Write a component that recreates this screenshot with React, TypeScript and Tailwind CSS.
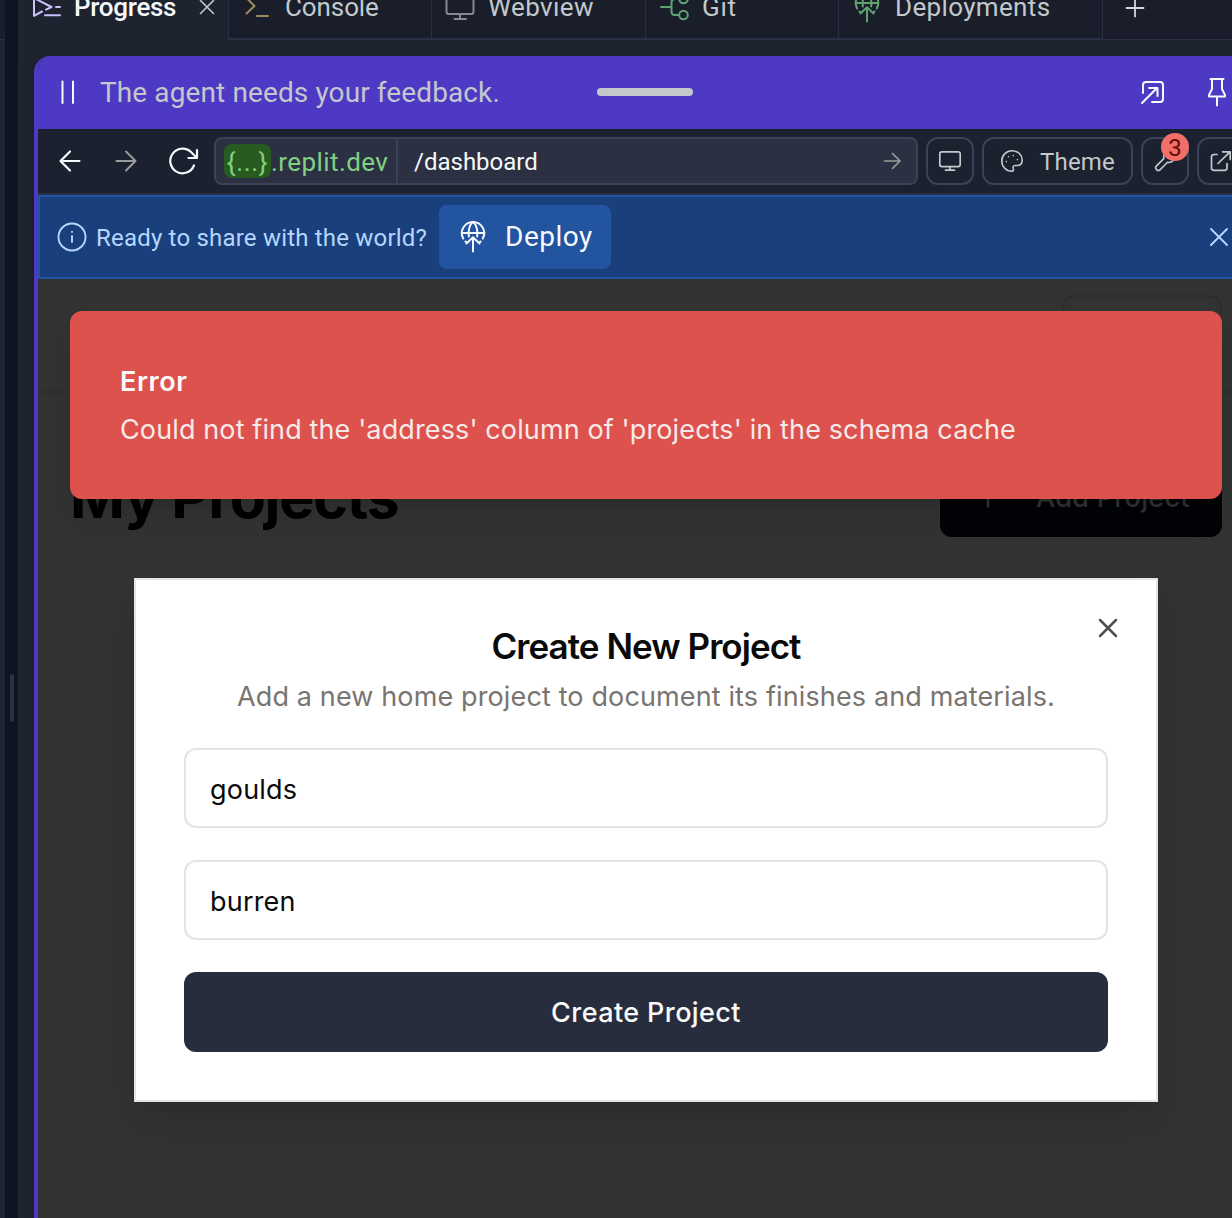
import React from "react";

type IconProps = {
  x: number;
  y: number;
  w: number;
  h: number;
  sw?: number;
  className?: string;
  children: React.ReactNode;
};

function Icon({ x, y, w, h, sw = 2, className = "", children }: IconProps) {
  return (
    <svg
      width={w}
      height={h}
      viewBox={`${x} ${y} ${w} ${h}`}
      fill="none"
      stroke="currentColor"
      strokeWidth={sw}
      strokeLinecap="round"
      strokeLinejoin="round"
      className={"shrink-0 " + className}
    >
      {children}
    </svg>
  );
}

function DeployIcon({ className = "" }: { className?: string }) {
  return (
    <Icon x={-13} y={-13} w={26} h={34} className={className}>
      <path d="M-9.8 5.500A11.2 11.2 0 1 1 9.800 5.500M-7.5 8.500L-7 9M7.500 8.500L7 9" />
      <path d="M-11 0H11" />
      <path d="M-4.2 3.5C-4.8 -2.5 -3.2 -8.5 0 -11.2C3.2 -8.5 4.8 -2.5 4.2 3.5" />
      <path d="M0 4.5V18.5M-6.5 10.5L0 4.2L6.5 10.5" />
    </Icon>
  );
}

function Tab({ className, children }: { className: string; children: React.ReactNode }) {
  return (
    <div className={"flex h-16 shrink-0 items-center border-b-2 border-[#2b3044] bg-[#191e2a] text-[26px] text-[#c2c8cc] " + className}>
      {children}
    </div>
  );
}

function TabStrip() {
  return (
    <div className="-mt-6 flex h-16 shrink-0 whitespace-nowrap">
      <div className="flex h-16 w-[210px] shrink-0 items-center border-b-2 border-transparent pl-[14px] text-[26px] font-medium text-[#f5f9fc]">
        <Icon x={32} y={-9} w={30} h={32} className="text-[#cbc0fb]">
          <path d="M45 15.2H60M56 7H60M42 11.5L34 15.8V-2L51.5 7L46 9.6" />
        </Icon>
        <span className="ml-3 tracking-[-0.3px]">Progress</span>
        <Icon x={200} y={-1} w={16} h={16} sw={1.6} className="ml-[23px] text-[#c2c8cc]">
          <path d="M201.500 0.500L214.500 13.500M214.500 0.500L201.500 13.500" />
        </Icon>
      </div>
      <Tab className="w-[204px] border-r border-l pl-[16px]">
        <Icon x={245} y={-9} w={25} h={32} className="text-[#9c8e5c]">
          <path d="M246.500 13.500L254.500 6L246.500 -2M257 16H268" />
        </Icon>
        <span className="ml-[15px] tracking-[-0.1px]">Console</span>
      </Tab>
      <Tab className="w-[214px] border-r pl-[13px]">
        <Icon x={445} y={-9} w={31} h={32} className="text-[#858a92]">
          <rect x="446.500" y="-6" width="27" height="20" rx="2" />
          <path d="M460 14.500V19M454.500 19H466" />
        </Icon>
        <span className="ml-[12px] tracking-[0.4px]">Webview</span>
      </Tab>
      <Tab className="w-[193px] border-r pl-[14px]">
        <Icon x={660} y={-9} w={30} h={32} className="text-[#5fa36e]">
          <path d="M661 7H671M679 -1H675Q671.500 -1 671.500 2.500V11.500Q671.500 15 675 15H679" />
          <circle cx="683.500" cy="-1" r="4.300" />
          <circle cx="683.500" cy="15" r="4.300" />
        </Icon>
        <span className="ml-[12px] tracking-[0.7px]">Git</span>
      </Tab>
      <Tab className="w-[264px] border-r pl-[15px]">
        <DeployIcon className="text-[#5fa36e]" />
        <span className="ml-[15px] tracking-[0.35px]">Deployments</span>
      </Tab>
      <div className="flex h-16 grow items-center border-b border-[#2b3044] bg-[#191e2a] pl-[22px] text-[#d5d9dc]">
        <Icon x={0} y={0} w={20} h={20} sw={1.8}>
          <path d="M1.500 10H18.500M10 1.500V18.500" />
        </Icon>
      </div>
    </div>
  );
}

function AgentBar() {
  return (
    <div className="flex h-[73px] shrink-0 items-center bg-[#4e39c4] pb-px">
      <Icon x={0} y={0} w={18} h={26} sw={2} className="ml-[21px] text-[#f5f9fc]">
        <path d="M3.500 2.500V24M14 2.500V24" />
      </Icon>
      <span className="ml-[23px] w-[402px] pt-0.5 text-[28px] tracking-[0.11px] whitespace-nowrap text-[#c2c8cc]">
        The agent needs your feedback.
      </span>
      <div className="ml-[95px] h-2 w-24 rounded-full bg-[#c2c8cc]" />
      <Icon x={1140} y={79} w={26} h={26} className="ml-[447px] text-[#f5f9fc]">
        <path d="M1143 93V85Q1143 82 1146 82H1160Q1163 82 1163 85V99Q1163 102 1160 102H1152" />
        <path d="M1142 103L1157 88M1149 88H1157.500V96" />
      </Icon>
      <Icon x={1207} y={76} w={20} h={32} className="ml-[41px] text-[#f5f9fc]">
        <path d="M1210.500 79H1223.500M1212 79V89L1209 95V96.500H1225V95L1222 89V79M1217 97V105.500" />
      </Icon>
    </div>
  );
}

function ToolButton({ className, children }: { className: string; children: React.ReactNode }) {
  return (
    <div className={"ml-2 flex h-12 shrink-0 items-center justify-center rounded-[12px] border-2 border-[#3c4157] text-[#c2c8cc] " + className}>
      {children}
    </div>
  );
}

function AddressBar() {
  return (
    <div className="flex h-[66px] shrink-0 items-center border-b-2 border-[#2b3044] bg-[#1c212f] pl-[20px] whitespace-nowrap">
      <Icon x={58} y={149} w={24} h={24} sw={2.2} className="text-[#f5f9fc]">
        <path d="M60.500 161H79.500M70 151.500L60.500 161L70 170.500" />
      </Icon>
      <Icon x={114} y={149} w={24} h={24} className="ml-8 text-[#9b9b9b]">
        <path d="M116.500 161H135.500M126 151.500L135.500 161L126 170.500" />
      </Icon>
      <Icon x={167} y={146} w={32} h={30} sw={2.2} className="ml-[29px] text-[#f5f9fc]">
        <path d="M194 165.500A12.300 12.300 0 1 1 191.500 152.500L196.500 157.500M197 150V158H188.500" />
      </Icon>
      <div className="ml-[15px] flex h-12 w-[704px] shrink-0 items-center rounded-[8px] border-2 border-[#3c4157] bg-[#2b3042]">
        <div className="flex h-full w-[182px] shrink-0 items-center border-r-2 border-[#3c4157] pl-2 text-[26px] text-[#80d184]">
          <span className="flex h-[34px] w-[47px] items-center justify-center rounded-[8px] bg-[#285b20] pt-0.5 tracking-[0.7px]">
            {"{...}"}
          </span>
          <span className="pt-0.5 tracking-[0.42px]">.replit.dev</span>
        </div>
        <span className="ml-[16px] grow pt-0.5 text-2xl text-[#f5f9fc]">/dashboard</span>
        <Icon x={882} y={151} w={20} h={20} sw={1.7} className="mr-[14px] text-[#9b9b9b]">
          <path d="M884.500 161H900M892.500 153.500L900 161L892.500 168.500" />
        </Icon>
      </div>
      <ToolButton className="w-12">
        <Icon x={938} y={149} w={24} h={24} sw={1.7}>
          <rect x="939.800" y="151.800" width="20.400" height="14.800" rx="2" />
          <path d="M950 167V170M945.500 170.200H954.500" />
        </Icon>
      </ToolButton>
      <ToolButton className="w-[151px]">
        <Icon x={1000} y={149} w={24} h={24} sw={1.6}>
          <path d="M1012.500 171.200C1006 171.400 1001.800 166.500 1001.800 161C1001.800 155 1006.500 150.800 1012 150.800C1018 150.800 1022.200 155 1022.200 160C1022.200 164 1019.500 165.500 1017 165.500H1015Q1012.500 165.800 1013.200 168.200Q1014 170.500 1012.500 171.200Z" />
          <path d="M1006.300 161.500V161.600M1008.500 156.700V156.800M1013.300 155.500V155.600M1017.500 159.500V159.600" />
        </Icon>
        <span className="ml-4 pt-0.5 text-2xl tracking-[0.2px]">Theme</span>
      </ToolButton>
      <ToolButton className="relative w-12">
        <Icon x={1153} y={149} w={24} h={24} sw={1.6}>
          <path d="M1163.800 158.600A6 6 0 0 1 1171.500 151.500L1168.500 154.500L1171.500 157.500L1174.500 154.500A6 6 0 0 1 1167.500 162.300L1160.200 169.600A2.600 2.600 0 0 1 1156.500 165.900Z" />
        </Icon>
        <span className="absolute -top-1.5 left-[18px] flex size-7 items-center justify-center rounded-full bg-[#f16f68] pt-0.5 text-2xl text-[#640c08]">
          3
        </span>
      </ToolButton>
      <ToolButton className="w-12">
        <Icon x={1209} y={149} w={24} h={24} sw={1.7}>
          <path d="M1217 154.500H1214Q1211.500 154.500 1211.500 157V168Q1211.500 170.300 1214 170.300H1224.500Q1227 170.300 1227 168V163.500" />
          <path d="M1218 163.500L1230 151.800M1222.500 151.800H1230.200V159.500" />
        </Icon>
      </ToolButton>
    </div>
  );
}

function DeployBanner() {
  return (
    <div className="flex h-[84px] w-[1200px] shrink-0 items-center border-2 border-[#2254a3] bg-[#193f7d] pl-[17px] whitespace-nowrap">
      <Icon x={57} y={222} w={30} h={30} sw={1.9} className="text-[#b6d6fd]">
        <circle cx="72" cy="237" r="13.500" />
        <path d="M72 236V242M72 231.800V232" />
      </Icon>
      <span className="ml-[9px] w-[333px] pt-[2px] text-2xl tracking-[0.2px] text-[#b6d6fd]">Ready to share with the world?</span>
      <div className="ml-[10px] flex h-16 w-[172px] items-center rounded-[8px] bg-[#2254a0] pl-[21px] text-[28px] text-[#f5f9fc]">
        <DeployIcon />
        <span className="ml-[19px] tracking-[0.5px]">Deploy</span>
      </div>
      <Icon x={1208} y={226} w={22} h={22} sw={1.9} className="ml-[597px] text-[#b6d6fd]">
        <path d="M1211 229L1227 245M1227 229L1211 245" />
      </Icon>
    </div>
  );
}

function DashboardPage() {
  return (
    <div className="font-[Inter,sans-serif]">
      <div className="flex justify-end border-b-2 border-[#2d2d2d] py-4 pr-[10px]">
        <div className="h-20 w-[160px] rounded-[12px] border-2 border-[#2d2d2d]" />
      </div>
      <div className="flex items-center justify-between pt-16 pr-[10px] pl-8">
        <h1 className="text-[59px] leading-[72px] font-bold tracking-[-1.25px] text-black">My Projects</h1>
        <div className="flex h-20 w-[282px] items-center rounded-[12px] bg-[#020306] pl-[32px] text-[27px] font-medium text-[#323232]">
          <Icon x={0} y={0} w={32} h={32} sw={2.6}>
            <path d="M6.500 16H25.500M16 6.500V25.500" />
          </Icon>
          <span className="ml-8 pt-[3px] tracking-[0.3px] whitespace-nowrap">Add Project</span>
        </div>
      </div>
    </div>
  );
}

function ErrorToast() {
  return (
    <div className="absolute top-8 left-8 h-[188px] w-[1152px] rounded-[12px] bg-[#dd524c] px-[50px] pt-[51px] font-[Inter,sans-serif] text-[27px] leading-10 whitespace-nowrap text-[#fafafa] shadow-[0_20px_30px_-6px_rgba(0,0,0,0.1),0_8px_12px_-8px_rgba(0,0,0,0.1)]">
      <div className="font-semibold tracking-[0.6px]">Error</div>
      <div className="mt-2 tracking-[0.12px] opacity-90">
        Could not find the 'address' column of 'projects' in the schema cache
      </div>
    </div>
  );
}

function Field({ value }: { value: string }) {
  return (
    <div className="flex h-20 shrink-0 items-center rounded-[12px] border-2 border-[#e4e4e4] px-6 pt-[5px] text-[27px] tracking-[0.2px] text-[#0a0a0a]">
      {value}
    </div>
  );
}

function ProjectDialog() {
  return (
    <div className="absolute top-[299px] left-24 flex h-[524px] w-[1024px] flex-col gap-8 border-2 border-[#e4e4e4] bg-white p-12 font-[Inter,sans-serif] shadow-[0_20px_30px_-6px_rgba(0,0,0,0.1),0_8px_12px_-8px_rgba(0,0,0,0.1)]">
      <div className="flex h-[88px] flex-col items-center gap-[13px] whitespace-nowrap">
        <h2 className="text-[35px] leading-9 font-semibold tracking-[-0.95px] text-[#0a0a0a]">Create New Project</h2>
        <p className="text-[27px] leading-10 tracking-[0.13px] text-[#79746f]">
          Add a new home project to document its finishes and materials.
        </p>
      </div>
      <Field value="goulds" />
      <Field value="burren" />
      <div className="flex h-20 shrink-0 items-center justify-center rounded-[12px] bg-[#282d3d] pt-[3px] text-[27px] font-medium tracking-[0.4px] text-[#fafafa]">
        Create Project
      </div>
      <div className="absolute top-8 right-8 text-[#505050]">
        <Icon x={0} y={0} w={32} h={32} sw={2.5}>
          <path d="M8 8L24 24M24 8L8 24" />
        </Icon>
      </div>
    </div>
  );
}

export default function App() {
  return (
    <div className="flex h-[1218px] w-[1232px] overflow-hidden bg-[#1e2330] font-[Roboto,sans-serif]">
      <div className="flex w-[5px] shrink-0 flex-col">
        <div className="h-10 shrink-0 border-b border-[#2b3044] bg-[#191e2a]" />
        <div className="grow bg-[#1f2633]" />
      </div>
      <div className="flex w-[13px] shrink-0 bg-[#0e1422] pt-[674px] pl-[5px]">
        <div className="h-12 w-1 rounded-full bg-[#2b3043]" />
      </div>
      <div className="flex w-[1214px] shrink-0 flex-col">
        <TabStrip />
        <div className="mt-4 ml-4 flex grow flex-col overflow-hidden rounded-tl-[16px] border-l-4 border-[#4e39c4] shadow-[0_0_12px_rgba(0,0,0,0.15)]">
          <AgentBar />
          <AddressBar />
          <DeployBanner />
          <div className="relative grow bg-[#323232]">
            <DashboardPage />
            <ErrorToast />
            <ProjectDialog />
          </div>
        </div>
      </div>
    </div>
  );
}
